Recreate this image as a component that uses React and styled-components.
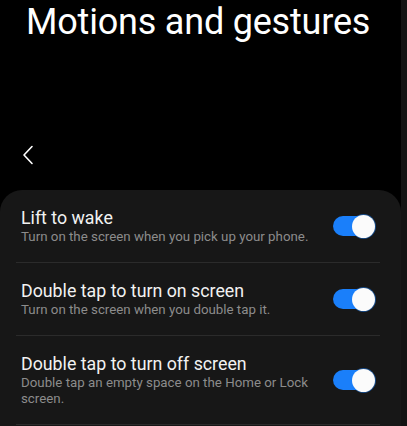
import React from "react";
import styled, { createGlobalStyle } from "styled-components";

const Global = createGlobalStyle`
  html, body { margin: 0; padding: 0; background: #000; }
  body { font-family: Roboto, "Noto Sans", sans-serif; -webkit-font-smoothing: antialiased; }
  * { box-sizing: border-box; }
`;

const Screen = styled.div`
  width: 407px;
  height: 426px;
  overflow: hidden;
  display: flex;
  background: #000;
`;

const Main = styled.div`
  flex: 1;
  display: flex;
  flex-direction: column;
  min-width: 0;
`;

const Edge = styled.div`
  width: 6px;
  background: #131313;
`;

const Title = styled.h1`
  margin: 0;
  padding: 0 0 0 26px;
  height: 134px;
  flex-shrink: 0;
  font-size: 36px;
  font-weight: 400;
  line-height: 44px;
  color: #fff;
  letter-spacing: -0.2px;
  white-space: nowrap;
`;

const TopBar = styled.div`
  height: 56px;
  flex-shrink: 0;
  display: flex;
  align-items: center;
  padding: 0 0 15px 21px;
`;

const Card = styled.div`
  background: #171717;
  border-radius: 22px 22px 0 0;
  padding: 0 21px 0 16px;
  flex: 1;
`;

const Row = styled.div`
  display: flex;
  align-items: center;
  padding: 17px 7px 17px 5px;
  border-bottom: 1px solid #2b2b2b;
`;

const Texts = styled.div`
  flex: 1;
  min-width: 0;
  padding-right: 18px;
`;

const RowTitle = styled.div`
  font-size: 17.8px;
  line-height: 22px;
  color: #f2f2f2;
`;

const RowSub = styled.div`
  font-size: 13.3px;
  line-height: 16px;
  color: #8c8c8c;
`;

const Toggle = styled.div`
  position: relative;
  width: 40px;
  height: 20px;
  border-radius: 10px;
  background: ${(p) => (p.$on ? "#1a7ffa" : "#555")};
  flex-shrink: 0;
`;

const Thumb = styled.div`
  position: absolute;
  top: -1.5px;
  right: -1.5px;
  width: 23px;
  height: 23px;
  border-radius: 50%;
  background: #fbfbfb;
  box-shadow: 0 0 0 1px rgba(26, 127, 250, 0.5);
`;

const items = [
  { t: "Lift to wake", s: "Turn on the screen when you pick up your phone." },
  { t: "Double tap to turn on screen", s: "Turn on the screen when you double tap it." },
  { t: "Double tap to turn off screen", s: "Double tap an empty space on the Home or Lock screen." },
];

export default function App() {
  return (
    <Screen>
      <Global />
      <Main>
        <Title>Motions and gestures</Title>
        <TopBar>
          <svg width="14" height="22" viewBox="0 0 14 22">
            <path d="M11 2.5 L3 11 L11 19.5" fill="none" stroke="#fff" strokeWidth="1.6" strokeLinecap="round" strokeLinejoin="round" />
          </svg>
        </TopBar>
        <Card>
          {items.map((it, i) => (
            <Row key={i}>
              <Texts>
                <RowTitle>{it.t}</RowTitle>
                <RowSub>{it.s}</RowSub>
              </Texts>
              <Toggle $on>
                <Thumb />
              </Toggle>
            </Row>
          ))}
        </Card>
      </Main>
      <Edge />
    </Screen>
  );
}
